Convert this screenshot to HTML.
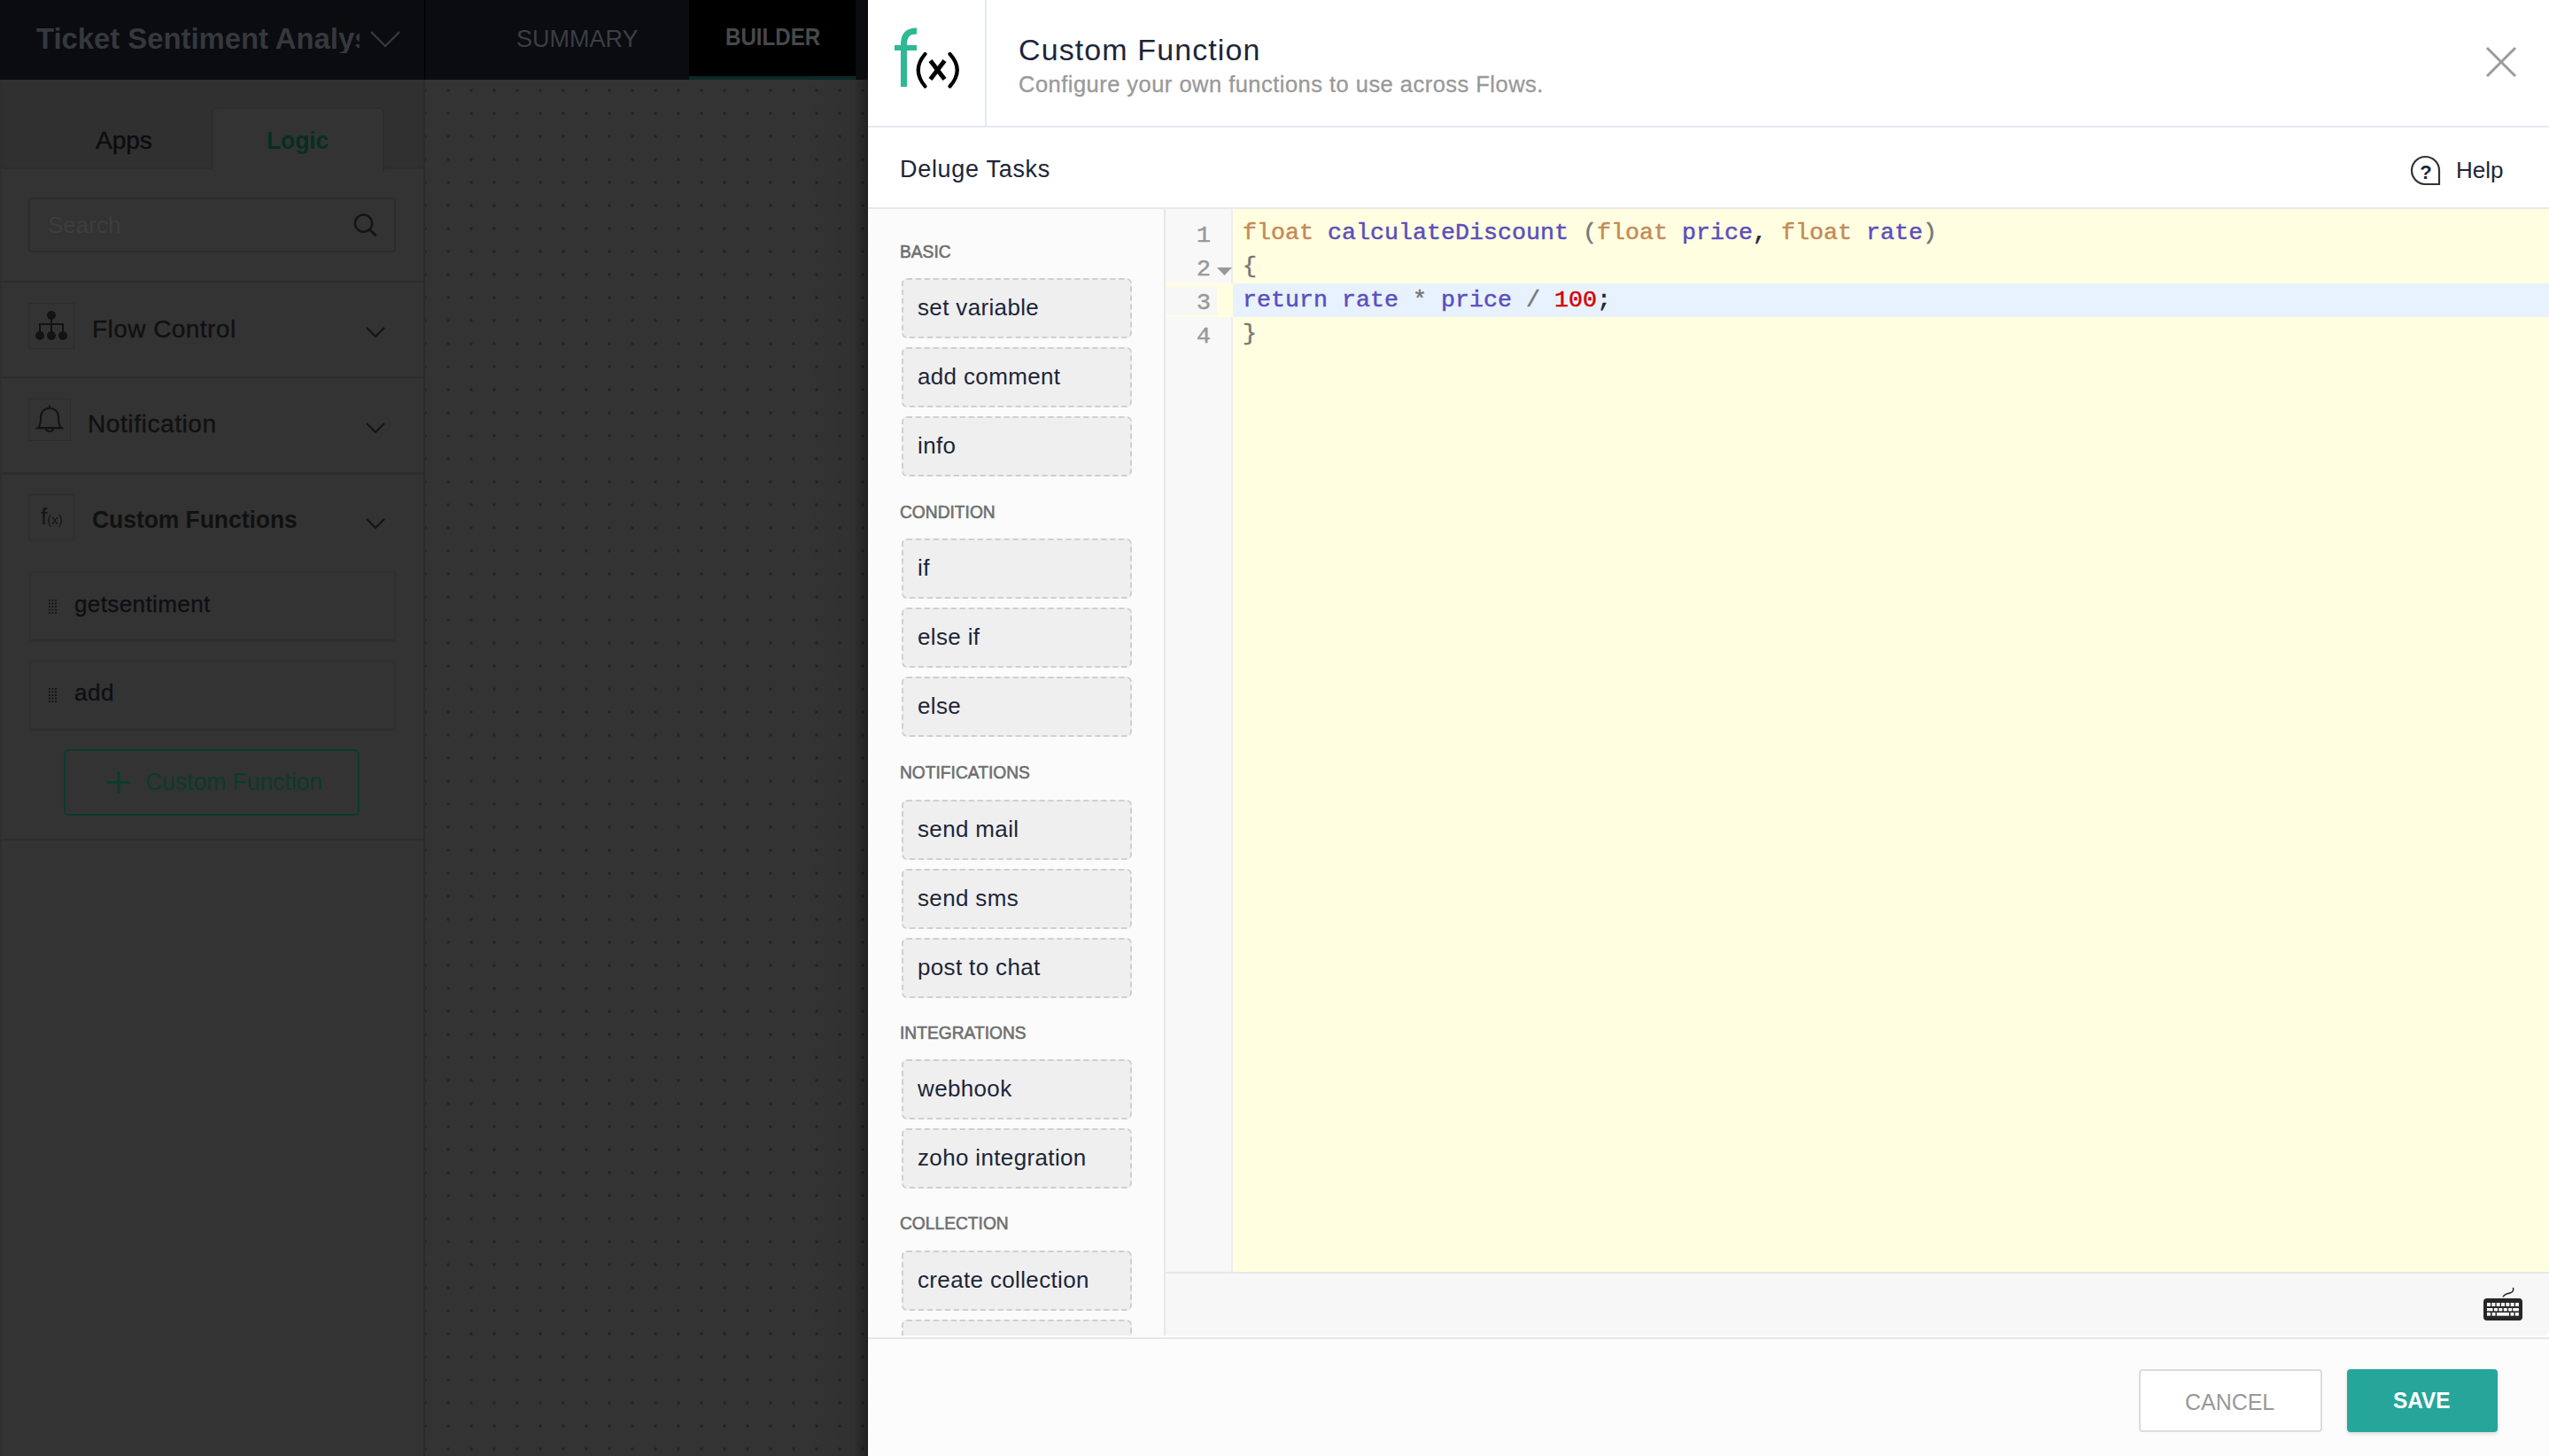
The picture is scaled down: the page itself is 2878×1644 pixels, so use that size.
<!DOCTYPE html>
<html><head><meta charset="utf-8">
<style>
*{box-sizing:border-box;margin:0;padding:0}
html,body{width:2878px;height:1644px;overflow:hidden;background:#2f2f2f;font-family:"Liberation Sans",sans-serif}
.abs{position:absolute}
.t{position:absolute;white-space:nowrap;line-height:1}
/* header */
#hdr{left:0;top:0;width:980px;height:90px;background:#0a0c10}
#canvas{left:480px;top:90px;width:500px;height:1554px;background-color:#333;
 background-image:radial-gradient(circle at 1.5px 1.5px,#232323 1.4px,transparent 1.9px);
 background-size:26px 26px;background-position:-1.5px 10.5px}
#shadow{left:900px;top:90px;width:80px;height:1554px;background:linear-gradient(to right,rgba(0,0,0,0) 0px,rgba(0,0,0,0.045) 66px,rgba(0,0,0,0.12) 66px,rgba(0,0,0,0.32) 79px,rgba(0,0,0,0.45) 79px)}
#side{left:0;top:90px;width:479px;height:1554px;background:#333}
#panel{left:980px;top:0;width:1898px;height:1644px;background:#fff}
.lbl{position:absolute;left:36px;margin-top:-2.5px;white-space:nowrap;line-height:1;font-size:20px;color:#6f6f6f;-webkit-text-stroke:0.6px #6f6f6f;transform:scaleX(0.96);transform-origin:0 0}
.btn{position:absolute;left:38px;width:260px;height:68px;background:#efefef;border:2px dashed #cfcfcf;border-radius:6px}
.btn span{position:absolute;left:16px;top:18px;white-space:nowrap;line-height:1;font-size:26px;color:#1c2639;letter-spacing:0.35px}
.code{position:absolute;left:0;-webkit-text-stroke:0.5px currentColor;white-space:pre;font-family:"Liberation Mono",monospace;font-size:26.67px;line-height:38px;color:#1c2639}
.ln{position:absolute;margin-top:3px;-webkit-text-stroke:0.5px #999;white-space:pre;font-family:"Liberation Mono",monospace;font-size:26.67px;line-height:38px;color:#999;text-align:right;width:30px}
.kw{color:#c48a59}.id{color:#5a4fbd}.pn{color:#777}.nm{color:#d40000}.dk{color:#1b2537}
</style></head><body>

<div id="hdr" class="abs">
  <div class="t" style="left:41px;top:26px;font-size:34px;font-weight:bold;color:#35383c;width:378px;overflow:hidden;transform:scaleX(0.965);transform-origin:0 0">Ticket Sentiment Analysis</div>
  <svg class="abs" style="left:418px;top:34px" width="34" height="20" viewBox="0 0 34 20"><path d="M1 2 L17 18 L33 2" fill="none" stroke="#3a3a3a" stroke-width="2.2"/></svg>
  <div class="abs" style="left:479px;top:0;width:1px;height:90px;background:#000"></div>
  <div class="t" style="left:583px;top:31px;font-size:27px;color:#3b3e44">SUMMARY</div>
  <div class="abs" style="left:778px;top:0;width:188px;height:90px;background:#000"></div>
  <div class="abs" style="left:778px;top:86px;width:188px;height:4px;background:#0a2a24"></div>
  <div class="t" style="left:819px;top:28px;font-size:28px;font-weight:bold;color:#47494b;transform:scaleX(0.862);transform-origin:0 0">BUILDER</div>
</div>

<div id="side" class="abs">
  <!-- tab bar (coords relative to side top=90) -->
  <div class="abs" style="left:0;top:0;width:479px;height:101px;background:#303030;border-bottom:2px solid #2d2d2d"></div>
  <div class="abs" style="left:0;top:0;width:2px;height:1554px;background:#2e2e2e"></div>
  <div class="abs" style="left:238.5px;top:30.5px;width:195px;height:72.5px;background:#333;border:2px solid #2d2d2d;border-bottom:none;border-radius:6px 6px 0 0"></div>
  <div class="t" style="left:108px;top:55px;font-size:28px;color:#0b0d10;-webkit-text-stroke:0.4px #0b0d10">Apps</div>
  <div class="t" style="left:300.5px;top:55px;font-size:28px;font-weight:bold;color:#062e24;transform:scaleX(0.94);transform-origin:0 0">Logic</div>
  <!-- search -->
  <div class="abs" style="left:32px;top:133px;width:415px;height:62px;border:2px solid #2c2c2c;border-radius:4px"></div>
  <div class="t" style="left:54px;top:151px;font-size:26px;color:#3b3e3f">Search</div>
  <svg class="abs" style="left:394px;top:148px" width="36" height="34" viewBox="0 0 36 34"><circle cx="16.5" cy="14.2" r="9.6" fill="none" stroke="#141414" stroke-width="2.5"/><path d="M23.3 21 L30.5 28.2" stroke="#141414" stroke-width="2.8"/></svg>
  <div class="abs" style="left:0;top:227px;width:479px;height:2px;background:#2d2d2d"></div>
  <!-- Flow control -->
  <div class="abs" style="left:32px;top:252px;width:52px;height:52px;border:1.5px solid #2c2c2c"></div>
  <svg class="abs" style="left:38px;top:258px" width="40" height="40" viewBox="0 0 40 40">
    <circle cx="20" cy="8" r="5" fill="#131313"/><path d="M20 8 V18 M7 30 V18 H33 V30 M20 18 V30" fill="none" stroke="#131313" stroke-width="2"/>
    <circle cx="7" cy="31" r="5" fill="#131313"/><circle cx="20" cy="31" r="5" fill="#131313"/><circle cx="33" cy="31" r="5" fill="#131313"/>
  </svg>
  <div class="t" style="left:104px;top:268px;font-size:28px;color:#111;letter-spacing:0.45px;-webkit-text-stroke:0.4px #111">Flow Control</div>
  <svg class="abs" style="left:413px;top:278px" width="22" height="14" viewBox="0 0 22 14"><path d="M1 2 L11 12 L21 2" fill="none" stroke="#151515" stroke-width="2.2"/></svg>
  <div class="abs" style="left:0;top:335px;width:479px;height:2px;background:#2d2d2d"></div>
  <!-- Notification -->
  <div class="abs" style="left:32px;top:360px;width:48px;height:48px;border:1.5px solid #2c2c2c"></div>
  <svg class="abs" style="left:38px;top:366px" width="36" height="36" viewBox="0 0 36 36">
    <path d="M18 1.5 V4 M5 27 C8 24 8 20 8 15 C8 9 12 5 18 5 C24 5 28 9 28 15 C28 20 28 24 31 27 Z M2.5 27.5 H33.5 M14 28 C14 32 22 32 22 28" fill="none" stroke="#131313" stroke-width="2"/>
  </svg>
  <div class="t" style="left:99px;top:375px;font-size:28px;color:#111;letter-spacing:0.6px;-webkit-text-stroke:0.4px #111">Notification</div>
  <svg class="abs" style="left:413px;top:386px" width="22" height="14" viewBox="0 0 22 14"><path d="M1 2 L11 12 L21 2" fill="none" stroke="#151515" stroke-width="2.2"/></svg>
  <div class="abs" style="left:0;top:443px;width:479px;height:3px;background:#2d2d2d"></div>
  <!-- Custom functions -->
  <div class="abs" style="left:32px;top:468px;width:52px;height:52px;border:1.5px solid #2c2c2c"></div>
  <div class="t" style="left:46px;top:480px;font-size:26px;color:#141414">f<span style="font-size:15px">(x)</span></div>
  <div class="t" style="left:104px;top:483px;font-size:28px;font-weight:bold;color:#111;transform:scaleX(0.943);transform-origin:0 0">Custom Functions</div>
  <svg class="abs" style="left:413px;top:494px" width="22" height="14" viewBox="0 0 22 14"><path d="M1 2 L11 12 L21 2" fill="none" stroke="#151515" stroke-width="2.2"/></svg>
  <!-- cards -->
  <div class="abs" style="left:34px;top:555px;width:412px;height:77px;background:#333;border:1px solid #2f2f2f;box-shadow:0 2px 2px rgba(0,0,0,0.12)"></div>
  <div class="abs" style="left:54px;top:586px;width:11px;height:18px;background-image:radial-gradient(circle,#111 0.9px,transparent 1.1px);background-size:3.6px 3.6px"></div>
  <div class="t" style="left:84px;top:579px;font-size:26px;color:#0d0f13;letter-spacing:0.4px;-webkit-text-stroke:0.3px #0d0f13">getsentiment</div>
  <div class="abs" style="left:34px;top:656px;width:412px;height:77px;background:#333;border:1px solid #2f2f2f;box-shadow:0 2px 2px rgba(0,0,0,0.12)"></div>
  <div class="abs" style="left:54px;top:686px;width:11px;height:18px;background-image:radial-gradient(circle,#111 0.9px,transparent 1.1px);background-size:3.6px 3.6px"></div>
  <div class="t" style="left:84px;top:678.5px;font-size:26px;color:#0d0f13;letter-spacing:0.6px;-webkit-text-stroke:0.3px #0d0f13">add</div>
  <!-- button -->
  <div class="abs" style="left:72px;top:756px;width:334px;height:75px;border:2px solid #0c3a2f;border-radius:6px"></div>
  <svg class="abs" style="left:121px;top:781px" width="26" height="25" viewBox="0 0 26 25"><path d="M0 12.5 H26 M13 0 V25" stroke="#0c3a2f" stroke-width="3"/></svg>
  <div class="t" style="left:164px;top:780px;font-size:27px;color:#0c3a2f;transform:scaleX(0.98);transform-origin:0 0">Custom Function</div>
  <div class="abs" style="left:0;top:857px;width:479px;height:2px;background:#2d2d2d"></div>
</div>

<div id="canvas" class="abs"></div>
<div id="shadow" class="abs"></div>
<div class="abs" style="left:478px;top:90px;width:2px;height:1554px;background:#2b2b2b"></div>

<div id="panel" class="abs">
  <!-- header (coords relative to panel left=980) -->
  <div class="abs" style="left:0;top:142px;width:1898px;height:2px;background:#e3e8f0"></div>
  <div class="abs" style="left:132px;top:0;width:2px;height:142px;background:#e5e9f2"></div>
  <svg class="abs" style="left:28px;top:30px" width="80" height="72" viewBox="0 0 80 72">
    <path d="M12.5 68 V20 C12.5 9 18 5 27 5" fill="none" stroke="#2eb893" stroke-width="7"/>
    <path d="M2 24 H27" stroke="#2eb893" stroke-width="6"/>
    <path d="M36.5 31 Q21 49 36.5 67.5 M64.5 31 Q81 49 64.5 67.5" fill="none" stroke="#000" stroke-width="4.2" stroke-linecap="round"/>
    <path d="M42.5 38.5 L58.5 59.5 M58.5 38.5 L42.5 59.5" fill="none" stroke="#000" stroke-width="5"/>
  </svg>
  
  <div class="t" style="left:170px;top:39px;font-size:34px;color:#1c2639;letter-spacing:1.1px">Custom Function</div>
  <div class="t" style="left:170px;top:82.5px;font-size:25.5px;color:#999;letter-spacing:0.47px;-webkit-text-stroke:0.3px #999">Configure your own functions to use across Flows.</div>
  <svg class="abs" style="left:1826px;top:52px" width="36" height="36" viewBox="0 0 36 36"><path d="M2 2 L34 34 M34 2 L2 34" stroke="#9b9b9b" stroke-width="3"/></svg>
  <!-- tasks header -->
  <div class="t" style="left:36px;top:178px;font-size:27px;color:#1c2639;letter-spacing:0.7px">Deluge Tasks</div>
  <svg class="abs" style="left:1741px;top:175px" width="36" height="36" viewBox="0 0 36 36"><path d="M33 33 H17 A15.5 15.5 0 1 1 33 17 Z" fill="none" stroke="#333" stroke-width="2.2"/><text x="18" y="26.5" text-anchor="middle" font-family="Liberation Sans" font-weight="bold" font-size="22" fill="#1c2639">?</text></svg>
  <div class="t" style="left:1793px;top:179px;font-size:26px;color:#1c2639">Help</div>
  <div class="abs" style="left:0;top:234px;width:1898px;height:2px;background:#e9e9e9"></div>
  <!-- tasks column -->
  <div class="abs" id="tasks" style="left:0;top:236px;width:334px;height:1272px;background:#fbfbfb;overflow:hidden">
    <div class="lbl" style="top:40px">BASIC</div>
    <div class="btn" style="top:78px"><span>set variable</span></div>
    <div class="btn" style="top:156px"><span>add comment</span></div>
    <div class="btn" style="top:234px"><span>info</span></div>
    <div class="lbl" style="top:334px">CONDITION</div>
    <div class="btn" style="top:372px"><span>if</span></div>
    <div class="btn" style="top:450px"><span>else if</span></div>
    <div class="btn" style="top:528px"><span>else</span></div>
    <div class="lbl" style="top:628px">NOTIFICATIONS</div>
    <div class="btn" style="top:667px"><span>send mail</span></div>
    <div class="btn" style="top:745px"><span>send sms</span></div>
    <div class="btn" style="top:823px"><span>post to chat</span></div>
    <div class="lbl" style="top:922px">INTEGRATIONS</div>
    <div class="btn" style="top:960px"><span>webhook</span></div>
    <div class="btn" style="top:1038px"><span>zoho integration</span></div>
    <div class="lbl" style="top:1137px">COLLECTION</div>
    <div class="btn" style="top:1176px"><span>create collection</span></div>
    <div class="btn" style="top:1254px"><span></span></div>
  </div>
  <div class="abs" style="left:334px;top:236px;width:2px;height:1273px;background:#e8e8e8"></div>
  <!-- gutter & editor -->
  <div class="abs" style="left:336px;top:236px;width:74px;height:1200px;background:#f8f8f8"></div>
  <div class="abs" style="left:410px;top:236px;width:2px;height:1200px;background:#ededed"></div>
  <div class="abs" id="editor" style="left:412px;top:236px;width:1486px;height:1200px;background:#fffee0">
    <div class="abs" style="left:0;top:84px;width:1486px;height:38px;background:#e8f2fe"></div>
    <div class="code" style="left:11px;top:8px"><span class="kw">float</span> <span class="id">calculateDiscount</span> <span class="pn">(</span><span class="kw">float</span> <span class="id">price</span><span class="dk">,</span> <span class="kw">float</span> <span class="id">rate</span><span class="pn">)</span></div>
    <div class="code" style="left:11px;top:46px"><span class="pn">{</span></div>
    <div class="code" style="left:11px;top:84px"><span class="id">return</span> <span class="id">rate</span> <span class="pn">*</span> <span class="id">price</span> <span class="pn">/</span> <span class="nm">100</span><span class="dk">;</span></div>
    <div class="code" style="left:11px;top:122px"><span class="pn">}</span></div>
  </div>
  <!-- gutter content -->
  <div class="abs" style="left:336px;top:320px;width:76px;height:38px;background:#fffee0"></div>
  <div class="abs" style="left:336px;top:324px;width:58px;height:32px;background:#f7f7f7"></div>
  <div class="ln" style="left:357px;top:244px">1</div>
  <div class="ln" style="left:357px;top:282px">2</div>
  <div class="ln" style="left:357px;top:320px">3</div>
  <div class="ln" style="left:357px;top:358px">4</div>
  <svg class="abs" style="left:394px;top:302px" width="17" height="9" viewBox="0 0 17 9"><path d="M0 0 H17 L8.5 9 Z" fill="#999"/></svg>
  <!-- keyboard -->
  <svg class="abs" style="left:1824px;top:1453px;z-index:5" width="48" height="40" viewBox="0 0 48 40">
    <path d="M22.3 10.8 C24 8.3 27.5 7.6 30.5 6.8 C33.3 6 33.9 3.6 33.6 1.4" fill="none" stroke="#262626" stroke-width="1.5" stroke-linecap="round"/>
    <rect x="0" y="13" width="44" height="25" rx="4" fill="#262626"/>
    <g fill="#f7f7f7">
      <rect x="4" y="18" width="4" height="4"/><rect x="9.33" y="18" width="4" height="4"/><rect x="14.67" y="18" width="4" height="4"/><rect x="20" y="18" width="4" height="4"/><rect x="25.33" y="18" width="4" height="4"/><rect x="30.67" y="18" width="4" height="4"/><rect x="36" y="18" width="4" height="4"/>
      <rect x="4" y="24" width="6.6" height="3.4"/><rect x="12" y="24" width="4" height="3.4"/><rect x="17.3" y="24" width="4" height="3.4"/><rect x="22.8" y="24" width="4" height="3.4"/><rect x="28.1" y="24" width="4" height="3.4"/><rect x="33.2" y="24" width="6.7" height="3.4"/>
      <rect x="4" y="29" width="4" height="3.7"/><rect x="9.6" y="29" width="3.9" height="3.7"/><rect x="14.9" y="29" width="14.1" height="3.7"/><rect x="30.5" y="29" width="3.9" height="3.7"/><rect x="35.8" y="29" width="4.1" height="3.7"/>
    </g>
  </svg>
  <div class="abs" style="left:336px;top:1436px;width:1562px;height:2px;background:#e8e8e8"></div>
  <div class="abs" style="left:336px;top:1438px;width:1562px;height:70px;background:#f7f7f7;border-bottom-right-radius:6px"></div>
  <!-- footer -->
  <div class="abs" style="left:0;top:1508px;width:1898px;height:2px;background:#fcfcfc"></div>
  <div class="abs" style="left:0;top:1510px;width:1898px;height:2px;background:#e6e6e6"></div>
  <div class="abs" style="left:0;top:1512px;width:1898px;height:132px;background:#fcfcfc"></div>
  <div class="abs" style="left:1435px;top:1546px;width:207px;height:71px;background:#fff;border:2px solid #dcdcdc;border-radius:4px"></div>
  <div class="t" style="left:1487px;top:1570px;font-size:26px;color:#999;transform:scaleX(0.96);transform-origin:0 0">CANCEL</div>
  <div class="abs" style="left:1670px;top:1546px;width:170px;height:71px;background:#26a69a;border-radius:4px;box-shadow:0 2px 4px rgba(0,0,0,0.15)"></div>
  <div class="t" style="left:1722px;top:1568px;font-size:26px;font-weight:bold;color:#fff;transform:scaleX(0.935);transform-origin:0 0">SAVE</div>
</div>

</body></html>
